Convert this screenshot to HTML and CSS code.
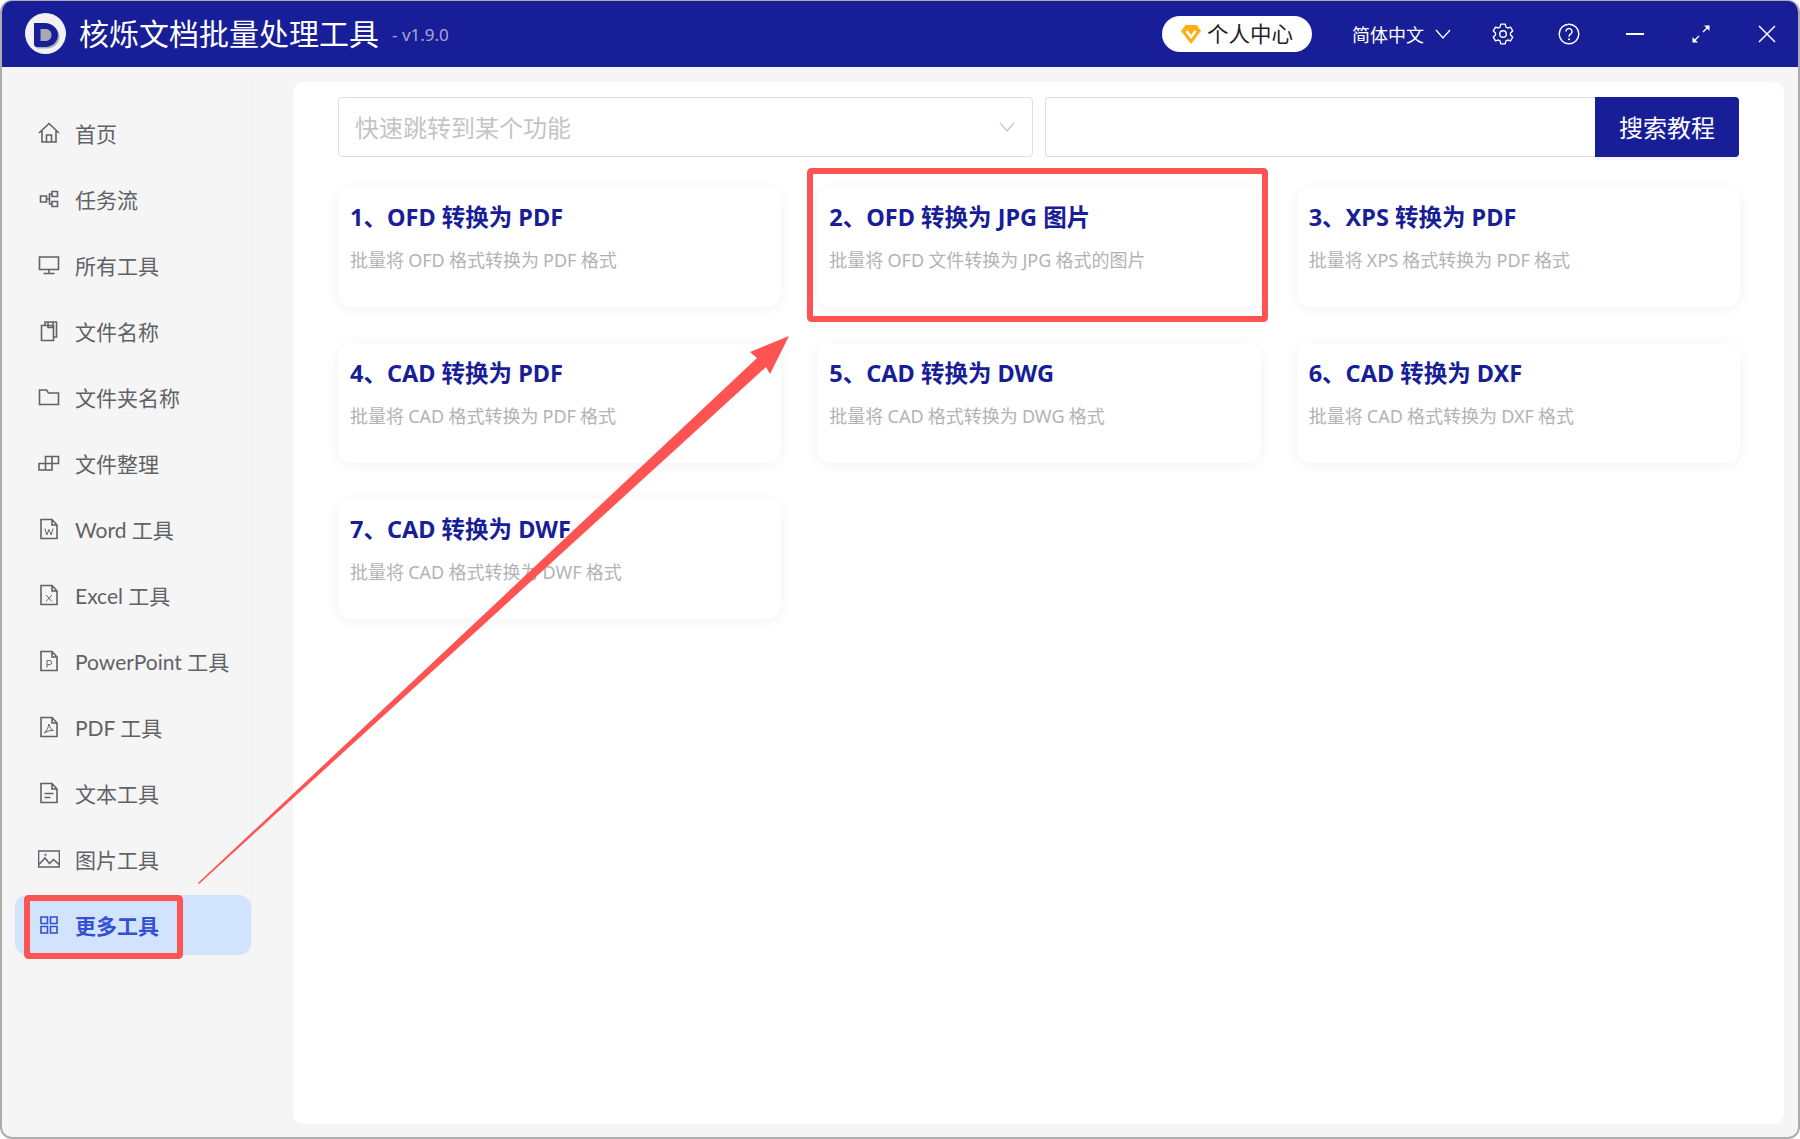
FILE: index.html
```html
<!DOCTYPE html>
<html lang="zh-CN">
<head>
<meta charset="utf-8">
<title>核烁文档批量处理工具</title>
<link rel="stylesheet" href="styles.css">
</head>
<body>
<div class="window">
  <header class="topbar">
    <svg class="logo" viewBox="0 0 41 41" aria-hidden="true">
      <circle cx="20.500" cy="20.500" r="20.500" fill="#f1f1f4"/>
      <path d="M9 10h11c7 0 13 5 13 12s-6 12-13 12H12a3 3 0 0 1-3-3z" fill="#a9a9b4" transform="translate(1.500 1.500)"/>
      <path fill-rule="evenodd" d="M9 10h11c7 0 13 5 13 12s-6 12-13 12H12a3 3 0 0 1-3-3zM15.500 16v12h5c3.500 0 6-2.500 6-6s-2.500-6-6-6z" fill="#181e97"/>
    </svg>
    <h1 class="app-title">核烁文档批量处理工具</h1>
    <span class="version">- v1.9.0</span>
    <div class="top-actions">
      <button class="user-pill">
        <svg class="gem" viewBox="0 0 20 19" aria-hidden="true"><path d="M4.500 0h11L20 6 10 19 0 6z" fill="#fbb016"/><path d="M5.500 6 10 12l4.500-6" fill="none" stroke="#fff" stroke-width="2.400"/></svg>
        <span class="pill-text">个人中心</span>
      </button>
      <div class="lang">
        <span>简体中文</span>
        <svg class="tb-chevron" viewBox="0 0 16 10" aria-hidden="true"><path d="M1 1l7 8 7-8" fill="none" stroke="#fff" stroke-width="1.300"/></svg>
      </div>
      <div class="win-icons">
        <span class="win-btn"><svg viewBox="0 0 22 22" aria-hidden="true"><path d="M8.800 1.500h4.400l.7 2.900 1.700 1 2.900-.9 2.200 3.800-2.200 2.100v2l2.200 2.100-2.200 3.800-2.900-.9-1.700 1-.7 2.900H8.800l-.7-2.900-1.700-1-2.900.9L1.300 14.500l2.200-2.100v-2L1.300 8.300l2.200-3.800 2.900.9 1.700-1z" fill="none" stroke="#fff" stroke-width="1.400" stroke-linejoin="round" transform="translate(0 -.4)"/><circle cx="11" cy="11" r="3.300" fill="none" stroke="#fff" stroke-width="1.400"/></svg></span>
        <span class="win-btn"><svg viewBox="0 0 22 22" aria-hidden="true"><circle cx="11" cy="11" r="9.800" fill="none" stroke="#fff" stroke-width="1.400"/><path d="M8 8.500a3 3 0 1 1 4.800 2.400c-1.100.8-1.800 1.400-1.800 2.800" fill="none" stroke="#fff" stroke-width="1.400"/><circle cx="11" cy="16.300" r="1" fill="#fff"/></svg></span>
        <span class="win-btn"><svg viewBox="0 0 22 22" aria-hidden="true"><path d="M2 11h18" stroke="#fff" stroke-width="1.800"/></svg></span>
        <span class="win-btn"><svg viewBox="0 0 22 22" aria-hidden="true"><path d="M13 9l6-6M3 19l6-6" stroke="#fff" stroke-width="1.400"/><path d="M14 2.500h5.500V8zM8 19.500H2.500V14z" fill="#fff"/></svg></span>
        <span class="win-btn"><svg viewBox="0 0 22 22" aria-hidden="true"><path d="M3 3l16 16M19 3L3 19" stroke="#fff" stroke-width="1.500"/></svg></span>
      </div>
    </div>
  </header>

  <div class="content">
    <aside class="sidebar">
      <nav class="nav">
        <a class="nav-item"><svg class="ico" viewBox="0 0 22 22"><path d="M1 11 11 1.500 21 11M4 9v11h14V9M8.500 20v-7h5v7"/></svg><span>首页</span></a>
        <a class="nav-item"><svg class="ico" viewBox="0 0 22 22"><path d="M2.500 8h6v6h-6zM14 3.500h5.500v5H14zM14 13.500h5.500v5H14zM8.500 11H11.500V6H14M11.500 11v5H14"/></svg><span>任务流</span></a>
        <a class="nav-item"><svg class="ico" viewBox="0 0 22 22"><path d="M1.500 3h19v12.500h-19zM11 15.500v4M5.500 19.500h11"/></svg><span>所有工具</span></a>
        <a class="nav-item"><svg class="ico" viewBox="0 0 22 22"><path d="M3.500 5.500h12v15h-12zM7 5.500V2h11.500v15h-3M10 2v5.500h5V2"/></svg><span>文件名称</span></a>
        <a class="nav-item"><svg class="ico" viewBox="0 0 22 22"><path d="M1.500 4h7l2 3h10v11.500h-19z"/></svg><span>文件夹名称</span></a>
        <a class="nav-item"><svg class="ico" viewBox="0 0 22 22"><path d="M7.500 4.500h13v7h-13zM14 4.500v7M1 11.500h13v6.500H1zM7.500 11.500V18"/></svg><span>文件整理</span></a>
        <a class="nav-item"><svg class="ico" viewBox="0 0 22 22"><path d="M3 1.500h11l5 5.500v13.500H3zM14 1.500V7h5"/><path class="thin" d="M7 10.500l1.800 6.500L11 11.500l2.200 5.500 1.800-6.500"/></svg><span>Word 工具</span></a>
        <a class="nav-item"><svg class="ico" viewBox="0 0 22 22"><path d="M3 1.500h11l5 5.500v13.500H3zM14 1.500V7h5"/><path class="thin" d="M8 11l6 6.500M14 11l-6 6.500"/></svg><span>Excel 工具</span></a>
        <a class="nav-item"><svg class="ico" viewBox="0 0 22 22"><path d="M3 1.500h11l5 5.500v13.500H3zM14 1.500V7h5"/><path class="thin" d="M9 17.500v-7h2.500a2 2 0 0 1 0 4.200H9"/></svg><span>PowerPoint 工具</span></a>
        <a class="nav-item"><svg class="ico" viewBox="0 0 22 22"><path d="M3 1.500h11l5 5.500v13.500H3zM14 1.500V7h5"/><path class="thin" d="M11 8c-.6 3-2 6.500-4.500 9 2-1.500 6-3 9-2.500-2.500-.8-4-3.500-4.500-6.500z"/></svg><span>PDF 工具</span></a>
        <a class="nav-item"><svg class="ico" viewBox="0 0 22 22"><path d="M3 1.500h11l5 5.500v13.500H3zM14 1.500V7h5M6.500 11.500h9M6.500 15.500h6"/></svg><span>文本工具</span></a>
        <a class="nav-item"><svg class="ico" viewBox="0 0 22 22"><path d="M.5 3h21v16H.5zM1 16.500l6-6.500 4.500 5.500 4-4 6 5.500"/><circle class="thin" cx="7.500" cy="6.800" r=".8"/></svg><span>图片工具</span></a>
        <a class="nav-item active"><svg class="ico" viewBox="0 0 22 22"><path d="M3 3h6.500v6.500H3zM12.500 3H19v6.500h-6.500zM3 12.500h6.500V19H3zM12.500 12.500H19V19h-6.500z"/></svg><span>更多工具</span></a>
      </nav>
    </aside>

    <main class="panel">
      <div class="search-row">
        <div class="select">
          <span class="placeholder">快速跳转到某个功能</span>
          <svg class="sel-chevron" viewBox="0 0 16 10" aria-hidden="true"><path d="M1 1l7 8 7-8" fill="none" stroke="#c4c6cc" stroke-width="1.300"/></svg>
        </div>
        <div class="search">
          <div class="search-input"></div>
          <button class="search-btn">搜索教程</button>
        </div>
      </div>
      <div class="cards">
        <article class="card"><h2>1、OFD 转换为 PDF</h2><p>批量将 OFD 格式转换为 PDF 格式</p></article>
        <article class="card"><h2>2、OFD 转换为 JPG 图片</h2><p>批量将 OFD 文件转换为 JPG 格式的图片</p></article>
        <article class="card"><h2>3、XPS 转换为 PDF</h2><p>批量将 XPS 格式转换为 PDF 格式</p></article>
        <article class="card"><h2>4、CAD 转换为 PDF</h2><p>批量将 CAD 格式转换为 PDF 格式</p></article>
        <article class="card"><h2>5、CAD 转换为 DWG</h2><p>批量将 CAD 格式转换为 DWG 格式</p></article>
        <article class="card"><h2>6、CAD 转换为 DXF</h2><p>批量将 CAD 格式转换为 DXF 格式</p></article>
        <article class="card"><h2>7、CAD 转换为 DWF</h2><p>批量将 CAD 格式转换为 DWF 格式</p></article>
      </div>
    </main>
  </div>

  <svg class="annot" viewBox="0 0 1800 1139" aria-hidden="true">
    <rect x="0" y="431" width="2" height="3" fill="#2f4f9f"/>
    <rect x="0" y="441" width="2" height="4" fill="#2f4f9f"/>
    <rect x="27" y="898" width="153" height="58" rx="1.500" fill="none" stroke="#fd5353" stroke-width="6"/>
    <rect x="810" y="171" width="455" height="148" rx="1.500" fill="none" stroke="#fd5353" stroke-width="6"/>
    <path d="M198 883 757 358 750 352 789 336 770 374 766 367 199 884z" fill="#fd5353"/>
  </svg>
</div>
</body>
</html>
```

FILE: styles.css
```css
* { box-sizing: border-box; }
html, body { margin: 0; padding: 0; background: #fff; }
body {
  width: 1800px;
  height: 1139px;
  overflow: hidden;
  font-family: "Noto Sans", "Noto Sans CJK SC", sans-serif;
}
h1, h2, p { margin: 0; font-weight: normal; }
button { font: inherit; border: 0; padding: 0; }

.window {
  position: relative;
  width: 1800px;
  height: 1139px;
  display: flex;
  flex-direction: column;
  background: #f5f5f5;
  border: 2px solid #adadad;
  border-top-width: 1px;
  border-radius: 12px;
  overflow: hidden;
}

/* top bar */
.topbar {
  flex: none;
  height: 66px;
  display: flex;
  align-items: center;
  background: #181e97;
  color: #fff;
  padding-left: 23px;
}
.logo { width: 41px; height: 41px; flex: none; margin-top: -1px; }
.app-title { font-size: 30px; margin-left: 13px; line-height: 1; white-space: nowrap; }
.version { font-size: 17px; color: #a6a9d3; margin-left: 13px; }
.top-actions { margin-left: auto; display: flex; align-items: center; }
.user-pill {
  width: 150px;
  height: 36px;
  border-radius: 18px;
  background: #fff;
  color: #222;
  display: flex;
  align-items: center;
  padding-left: 19px;
  font-size: 21.500px;
}
.pill-text { position: relative; top: -2px; }
.gem { width: 20px; height: 19px; margin-right: 6px; flex: none; }
.lang { display: flex; align-items: center; font-size: 18px; margin-left: 40px; width: 118px; }
.tb-chevron { width: 16px; height: 10px; margin-left: 11px; }
.win-icons { display: flex; align-items: center; margin-right: -2px; }
.win-btn { width: 66px; height: 40px; display: flex; align-items: center; justify-content: center; }
.win-btn svg { width: 22px; height: 22px; }

/* content */
.content { flex: 1; display: flex; min-height: 0; }
.sidebar { flex: none; width: 291px; padding: 15px 41px 0 13px; }
.nav { height: 860px; border-right: 1px solid #f0f0f0; padding-top: 21px; }
.nav-item {
  height: 60px;
  margin-bottom: 6px;
  display: flex;
  align-items: center;
  padding-left: 23px;
  border-radius: 12px;
  font-family: "Lato", "Noto Sans CJK SC", sans-serif;
  font-size: 21px;
  color: #606266;
}
.nav-item span { margin-left: 15px; white-space: nowrap; }
.ico { width: 22px; height: 22px; flex: none; fill: none; stroke: #606266; stroke-width: 1.600; }
.ico .thin { stroke-width: 1; }
.nav-item.active { background: #d2e3fd; color: #3450d2; font-weight: 700; }
.nav-item.active .ico { stroke: #3450d2; }

/* main panel */
.panel {
  flex: 1;
  margin: 15px 14px 13px 0;
  background: #fff;
  border-radius: 10px;
  padding: 15px 44px 0 45px;
  min-width: 0;
}
.search-row { display: grid; grid-template-columns: 695px 1fr; gap: 12px; height: 60px; margin-right: 1px; }
.select {
  display: flex;
  align-items: center;
  justify-content: space-between;
  border: 1.500px solid #dcdfe6;
  border-radius: 4px;
  padding: 0 17px 0 16px;
}
.placeholder { font-size: 24px; color: #c4c4c4; position: relative; top: -1px; }
.sel-chevron { width: 16px; height: 10px; }
.search { display: flex; min-width: 0; }
.search-input { flex: 1; border: 1.500px solid #dcdfe6; border-right: 0; border-radius: 4px 0 0 4px; }
.search-btn {
  flex: none;
  width: 144px;
  background: #181e97;
  color: #fff;
  font-size: 24px;
  padding-bottom: 2px;
  border-radius: 0 4px 4px 0;
  box-shadow: 0 3px 0 #f5f5f5;
}
.cards {
  margin-top: 30px;
  display: grid;
  grid-template-columns: repeat(3, 1fr);
  grid-auto-rows: 120px;
  gap: 36px;
}
.card {
  background: #fff;
  border-radius: 14px;
  box-shadow: 0 2px 14px rgba(0, 0, 0, .06);
  padding: 13px 12px;
}
.card h2 { font-size: 23.500px; line-height: 34px; font-weight: 700; color: #181e97; white-space: nowrap; }
.card p { font-size: 18px; line-height: 26px; margin-top: 13px; color: #b3b3b3; white-space: nowrap; word-spacing: -.5px; }

/* annotations drawn on top of the screenshot */
.annot { position: absolute; left: -2px; top: -1px; width: 1800px; height: 1139px; pointer-events: none; }
```
